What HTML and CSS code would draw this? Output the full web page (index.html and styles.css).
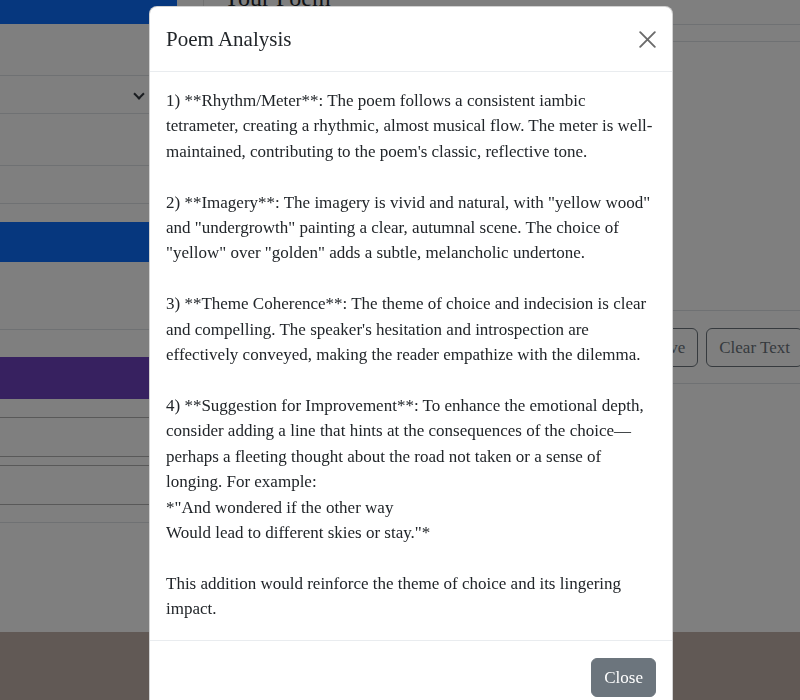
FILE: index.html
```html
<!DOCTYPE html>
<html lang="en">
<head>
<meta charset="utf-8">
<title>Poem Analysis</title>
<link rel="stylesheet" href="styles.css">
</head>
<body>
<div class="page">
  <aside class="side-card">
    <div class="side-head"></div>
    <div class="side-body">
      <div class="field select"><span class="chev"></span></div>
      <div class="field gap-l"></div>
      <button class="btn-fill btn-blue" type="button"></button>
      <div class="result-row"></div>
      <button class="btn-fill btn-purple" type="button"></button>
      <div class="field dark first-dark"></div>
      <div class="field dark second-dark"></div>
      <div class="side-rule"></div>
    </div>
  </aside>
  <main class="main-card">
    <div class="main-head"><h2 class="main-title">Your Poem</h2></div>
    <div class="main-strip"></div>
    <div class="main-editor"></div>
    <div class="main-foot">
      <button class="btn-outline" type="button">Save</button>
      <button class="btn-outline" type="button">Clear Text</button>
    </div>
  </main>
</div>

<div class="backdrop">
  <div class="modal" role="dialog" aria-labelledby="modal-title">
    <div class="modal-header">
      <h5 class="modal-title" id="modal-title">Poem Analysis</h5>
      <button class="btn-close" type="button" aria-label="Close">
        <svg viewBox="0 0 17 17" width="17" height="17" aria-hidden="true"><path d="M1.2 1.2 L15.8 15.8 M15.8 1.2 L1.2 15.8" stroke="currentColor" stroke-width="1.9" stroke-linecap="round" fill="none"/></svg>
      </button>
    </div>
    <div class="modal-body"><div class="analysis">1) **Rhythm/Meter**: The poem follows a consistent iambic tetrameter, creating a rhythmic, almost musical flow. The meter is well-maintained, contributing to the poem's classic, reflective tone.

2) **Imagery**: The imagery is vivid and natural, with "yellow wood" and "undergrowth" painting a clear, autumnal scene. The choice of "yellow" over "golden" adds a subtle, melancholic undertone.

3) **Theme Coherence**: The theme of choice and indecision is clear and compelling. The speaker's hesitation and introspection are effectively conveyed, making the reader empathize with the dilemma.

4) **Suggestion for Improvement**: To enhance the emotional depth, consider adding a line that hints at the consequences of the choice—perhaps a fleeting thought about the road not taken or a sense of longing. For example:
*"And wondered if the other way
Would lead to different skies or stay."*

This addition would reinforce the theme of choice and its lingering impact.</div></div>
    <div class="modal-footer">
      <button class="btn-secondary" type="button">Close</button>
    </div>
  </div>
</div>
</body>
</html>
```

FILE: styles.css
```css
* {
  box-sizing: border-box;
}

html,
body {
  margin: 0;
  height: 100%;
  overflow: hidden;
}

body {
  font-family: "Liberation Serif", "Times New Roman", serif;
  font-size: 17px;
  line-height: 1.5;
  color: #212529;
  background: #c2b3aa;
}

button {
  font: inherit;
}

/* ---------- underlying page ---------- */
.page {
  width: 844px;
  height: 632px;
  margin-left: -24px;
  background: #fff;
  display: flex;
  gap: 26px;
}

.side-card {
  width: 201px;
  flex: none;
  display: flex;
  flex-direction: column;
}

.side-head {
  height: 24px;
  background: #0d6efd;
}

.side-body {
  display: flex;
  flex-direction: column;
  padding: 0 18px 0 16px;
}

.field {
  height: 39px;
  border: 1px solid #dee2e6;
  border-radius: 6px;
  position: relative;
}

.select {
  margin-top: 51px;
}

.chev {
  position: absolute;
  right: 15px;
  top: 14px;
  width: 8px;
  height: 8px;
  border-right: 2px solid #343a40;
  border-bottom: 2px solid #343a40;
  transform: rotate(45deg);
}

.gap-l {
  margin-top: 51px;
}

.btn-fill {
  height: 40px;
  border: 0;
  border-radius: 6px;
  margin-top: 18px;
  display: block;
  width: 100%;
}

.btn-blue {
  background: #0d6efd;
}

.result-row {
  margin-top: 28px;
  height: 40px;
  border-bottom: 1px solid #dee2e6;
}

.btn-purple {
  background: #6f42c1;
  height: 42px;
  margin-top: 27px;
}

.dark {
  border-color: #b3b3b3;
  height: 40px;
}

.first-dark {
  margin-top: 18px;
}

.second-dark {
  margin-top: 8px;
}

.side-rule {
  margin-top: 17px;
  border-top: 1px solid #dee2e6;
}

.main-card {
  flex: 1;
  display: flex;
  flex-direction: column;
  height: 384px;
  border-left: 1px solid #e4e4e4;
  border-bottom: 1px solid #dee2e6;
}

.main-head {
  height: 25px;
  padding-left: 19px;
  border-bottom: 1px solid #dee2e6;
  overflow: hidden;
}

.main-title {
  margin: -17px 0 0;
  font-size: 24px;
  line-height: 30px;
  font-weight: 400;
}

.main-strip {
  height: 17px;
  border-bottom: 1px solid #dee2e6;
}

.main-editor {
  flex: 1;
}

.main-foot {
  display: flex;
  justify-content: flex-end;
  gap: 8px;
  padding: 17px 17px 16px;
  border-top: 1px solid #dee2e6;
}

.btn-outline {
  border: 1px solid #6c757d;
  background: transparent;
  color: #6c757d;
  border-radius: 6px;
  padding: 6px 12px;
  line-height: 25.5px;
}

/* ---------- modal ---------- */
.backdrop {
  position: fixed;
  inset: 0;
  background: rgba(0, 0, 0, 0.5);
  overflow: hidden;
}

.modal {
  margin: 6px 0 0 149px;
  width: 524px;
  background: #fff;
  border: 1px solid rgba(0, 0, 0, 0.175);
  border-radius: 8px;
}

.modal-header {
  display: flex;
  align-items: center;
  justify-content: space-between;
  padding: 16px;
  border-bottom: 1px solid #e9ecef;
}

.modal-title {
  margin: 0;
  font-size: 21px;
  line-height: 32px;
  font-weight: 400;
}

.btn-close {
  width: 17px;
  height: 17px;
  padding: 0;
  margin-right: 0;
  border: 0;
  background: transparent;
  color: #6b6b6b;
  display: flex;
}

.modal-body {
  padding: 16px 16px 18px;
}

.analysis {
  white-space: pre-line;
  line-height: 25.4px;
}

.modal-footer {
  display: flex;
  justify-content: flex-end;
  padding: 17px 16px;
  border-top: 1px solid #e9ecef;
}

.btn-secondary {
  border: 1px solid #6c757d;
  background: #6c757d;
  color: #fff;
  border-radius: 6px;
  padding: 6px 12px;
  line-height: 25.5px;
}
```
